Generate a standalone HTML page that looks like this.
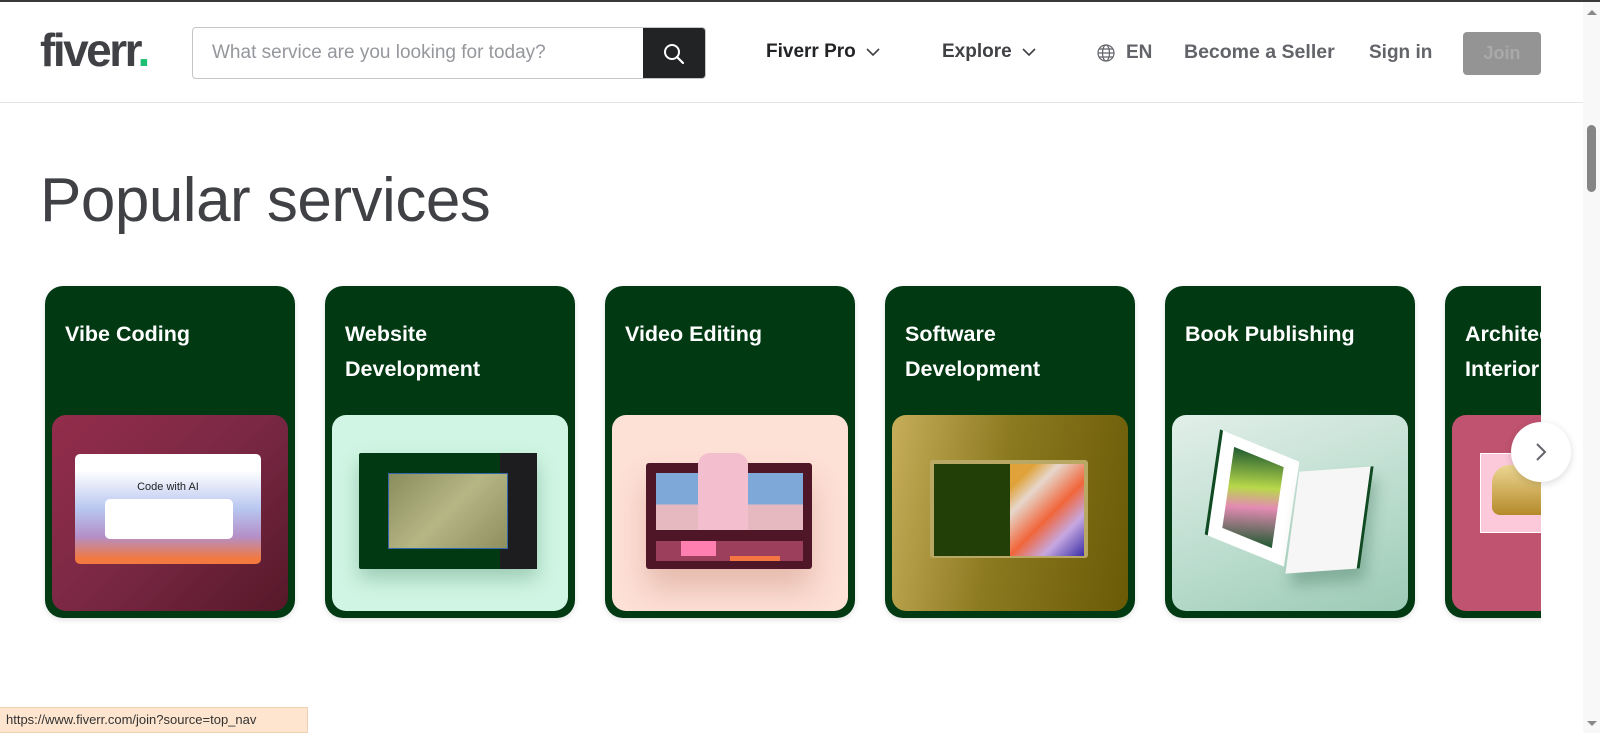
<!DOCTYPE html>
<html><head><meta charset="utf-8"><style>
*{margin:0;padding:0;box-sizing:border-box}
body{width:1600px;height:733px;overflow:hidden;background:#fff;font-family:"Liberation Sans",sans-serif;position:relative}
.abs{position:absolute}
.nav{position:absolute;top:0;font-size:19px;color:#62646a;font-weight:bold;line-height:1}
.card{position:absolute;top:286px;width:250px;height:332px;background:#003912;border-radius:18px;box-shadow:0 2px 6px rgba(0,0,0,.12);overflow:hidden}
.card h3{position:absolute;left:20px;top:31px;color:#fff;font-size:21.5px;line-height:35px;font-weight:bold;width:200px}
.img{position:absolute;left:7px;top:129px;width:236px;height:196px;border-radius:14px;overflow:hidden}
</style></head><body>
<div class="abs" style="left:0;top:0;width:1600px;height:2px;background:#3a3a3a"></div>
<div class="abs" style="left:0;top:102px;width:1583px;height:1px;background:#e4e5e7"></div>

<div class="abs" style="left:40px;top:26px;font-size:46px;font-weight:bold;color:#404145;letter-spacing:-2.5px;line-height:48px">fiverr<span style="color:#1dbf73">.</span></div>

<div class="abs" style="left:192px;top:27px;width:514px;height:52px;border:1px solid #c5c6c9;border-radius:4px;overflow:hidden">
<div class="abs" style="left:19px;top:14px;font-size:19px;color:#95979d">What service are you looking for today?</div>
<div class="abs" style="right:0;top:0;width:62px;height:52px;background:#222325">
<svg class="abs" style="left:20px;top:15px" width="22" height="22" viewBox="0 0 22 22"><circle cx="9" cy="9" r="7" fill="none" stroke="#fff" stroke-width="2"/><path d="M14 14l6 6" stroke="#fff" stroke-width="2.2" stroke-linecap="round"/></svg>
</div></div>

<div class="nav" style="left:766px;top:42px;color:#222325">Fiverr Pro <svg width="16" height="10" viewBox="0 0 16 10" style="margin-left:4px"><path d="M2 2l6 6 6-6" fill="none" stroke="#404145" stroke-width="1.6"/></svg></div>
<div class="nav" style="left:942px;top:42px;color:#404145">Explore <svg width="16" height="10" viewBox="0 0 16 10" style="margin-left:4px"><path d="M2 2l6 6 6-6" fill="none" stroke="#404145" stroke-width="1.6"/></svg></div>
<svg class="abs" style="left:1097px;top:44px" width="18" height="18" viewBox="0 0 18 18" fill="none" stroke="#62646a" stroke-width="1.2"><circle cx="9" cy="9" r="8"/><ellipse cx="9" cy="9" rx="3.5" ry="8"/><path d="M1 9h16M2.5 5h13M2.5 13h13"/></svg>
<div class="nav" style="left:1126px;top:43px">EN</div>
<div class="nav" style="left:1184px;top:43px;font-size:19.5px">Become a Seller</div>
<div class="nav" style="left:1369px;top:43px">Sign in</div>
<div class="abs" style="left:1463px;top:32px;width:78px;height:43px;background:#949494;border-radius:4px;color:#a9a9a9;font-size:18px;font-weight:bold;text-align:center;line-height:43px">Join</div>

<div class="abs" style="left:40px;top:165px;font-size:62px;color:#404145;line-height:72px;letter-spacing:-0.5px">Popular services</div>

<div class="abs" style="left:0;top:280px;width:1541px;height:350px;overflow:hidden">
<div class="card" style="left:45px;top:6px"><h3>Vibe Coding</h3>
<div class="img" style="background:linear-gradient(135deg,#932d4c,#7a2844 50%,#561829)">
<div class="abs" style="left:23px;top:39px;width:186px;height:110px;border-radius:5px;background:linear-gradient(180deg,#fff 15%,#b8c6f0 50%,#b48fc8 75%,#f2793f 95%)">
<div class="abs" style="left:0;top:27px;width:186px;text-align:center;font-size:11px;color:#222">Code with AI</div>
<div class="abs" style="left:30px;top:45px;width:128px;height:40px;background:#fff;border-radius:5px"></div>
</div></div></div>

<div class="card" style="left:325px;top:6px"><h3>Website Development</h3>
<div class="img" style="background:#d0f5e4">
<div class="abs" style="left:27px;top:38px;width:178px;height:116px;background:#003912;border-radius:2px;box-shadow:0 10px 20px rgba(0,80,40,.25)">
<div class="abs" style="right:0;top:0;width:37px;height:116px;background:#1d1d1f"></div>
<div class="abs" style="left:29px;top:20px;width:120px;height:76px;background:linear-gradient(135deg,#8a8d5c,#b5b684 50%,#8e8f60);border:1px solid #3466a8"></div>
</div></div></div>

<div class="card" style="left:605px;top:6px"><h3>Video Editing</h3>
<div class="img" style="background:#fde0d6">
<div class="abs" style="left:34px;top:48px;width:166px;height:106px;background:#4e1626;border-radius:3px;box-shadow:0 20px 30px rgba(180,100,80,.3)">
<div class="abs" style="left:10px;top:10px;width:147px;height:57px;background:linear-gradient(180deg,#7da8d8 55%,#e6b8bf 55%)"></div>
<div class="abs" style="left:52px;top:-10px;width:50px;height:77px;background:#f3bfcf;border-radius:12px 12px 0 0"></div>
<div class="abs" style="left:10px;top:78px;width:147px;height:20px;background:#9c3f5c"></div>
<div class="abs" style="left:35px;top:78px;width:35px;height:15px;background:#ff7fb0"></div>
<div class="abs" style="left:84px;top:93px;width:50px;height:5px;background:#f47542"></div>
</div></div></div>

<div class="card" style="left:885px;top:6px"><h3>Software Development</h3>
<div class="img" style="background:linear-gradient(100deg,#c7ae5a,#8c7a20 45%,#6a5a06)">
<div class="abs" style="left:38px;top:45px;width:158px;height:98px;background:#b9a864;border-radius:3px;padding:3px">
<div class="abs" style="left:4px;top:4px;width:76px;height:92px;background:#213f06"></div>
<div class="abs" style="left:80px;top:4px;width:74px;height:92px;background:linear-gradient(135deg,#e0a33c 15%,#e6d7cc 30%,#f1663a 55%,#c6a8e0 75%,#3a2ea8)"></div>
</div></div></div>

<div class="card" style="left:1165px;top:6px"><h3>Book Publishing</h3>
<div class="img" style="background:linear-gradient(160deg,#e2efe9,#b8dbcc 60%,#9ccab6)">
<div class="abs" style="left:40px;top:28px;width:80px;height:110px;background:#fff;transform:skewY(15deg) rotate(8deg);border-left:3px solid #0f4a22"></div>
<div class="abs" style="left:56px;top:40px;width:50px;height:85px;background:linear-gradient(160deg,#1e5a30,#b8d84a 40%,#e48bb3 60%,#1e5a30);transform:skewY(15deg) rotate(8deg)"></div>
<div class="abs" style="left:120px;top:55px;width:75px;height:100px;background:#f6f6f6;transform:skewY(-12deg) rotate(8deg);border-right:3px solid #0f4a22;box-shadow:6px 12px 14px rgba(0,60,30,.25)"></div>
</div></div>

<div class="card" style="left:1445px;top:6px"><h3 style="width:240px;white-space:nowrap">Architecture &amp;<br>Interior Design</h3>
<div class="img" style="background:#c0536f">
<div class="abs" style="left:28px;top:38px;width:80px;height:80px;background:#fbc9d9;border:1px solid #fff"></div>
<div class="abs" style="left:40px;top:50px;width:60px;height:50px;background:linear-gradient(180deg,#ecd692,#b58a2a);border-radius:18px 8px 8px 8px"></div>
</div></div>
</div>

<div class="abs" style="left:1511px;top:422px;width:60px;height:60px;border-radius:50%;background:#fff;box-shadow:0 2px 8px rgba(0,0,0,.15)">
<svg class="abs" style="left:24px;top:20px" width="12" height="20" viewBox="0 0 12 20"><path d="M2 2l8 8-8 8" fill="none" stroke="#62646a" stroke-width="2"/></svg></div>

<div class="abs" style="left:1583px;top:2px;width:17px;height:731px;background:#f8f8f8">
<div class="abs" style="left:4px;top:8px;width:0;height:0;border-left:5px solid transparent;border-right:5px solid transparent;border-bottom:5px solid #888"></div>
<div class="abs" style="left:4px;top:123px;width:9px;height:67px;border-radius:5px;background:#858585"></div>
<div class="abs" style="left:4px;top:719px;width:0;height:0;border-left:5px solid transparent;border-right:5px solid transparent;border-top:5px solid #888"></div>
</div>

<div class="abs" style="left:0;top:707px;width:308px;height:26px;background:#fde5cf;border:1px solid #f0d0b0;border-left:none;font-size:13px;color:#333;line-height:24px;padding-left:6px">https://www.fiverr.com/join?source=top_nav</div>
</body></html>
